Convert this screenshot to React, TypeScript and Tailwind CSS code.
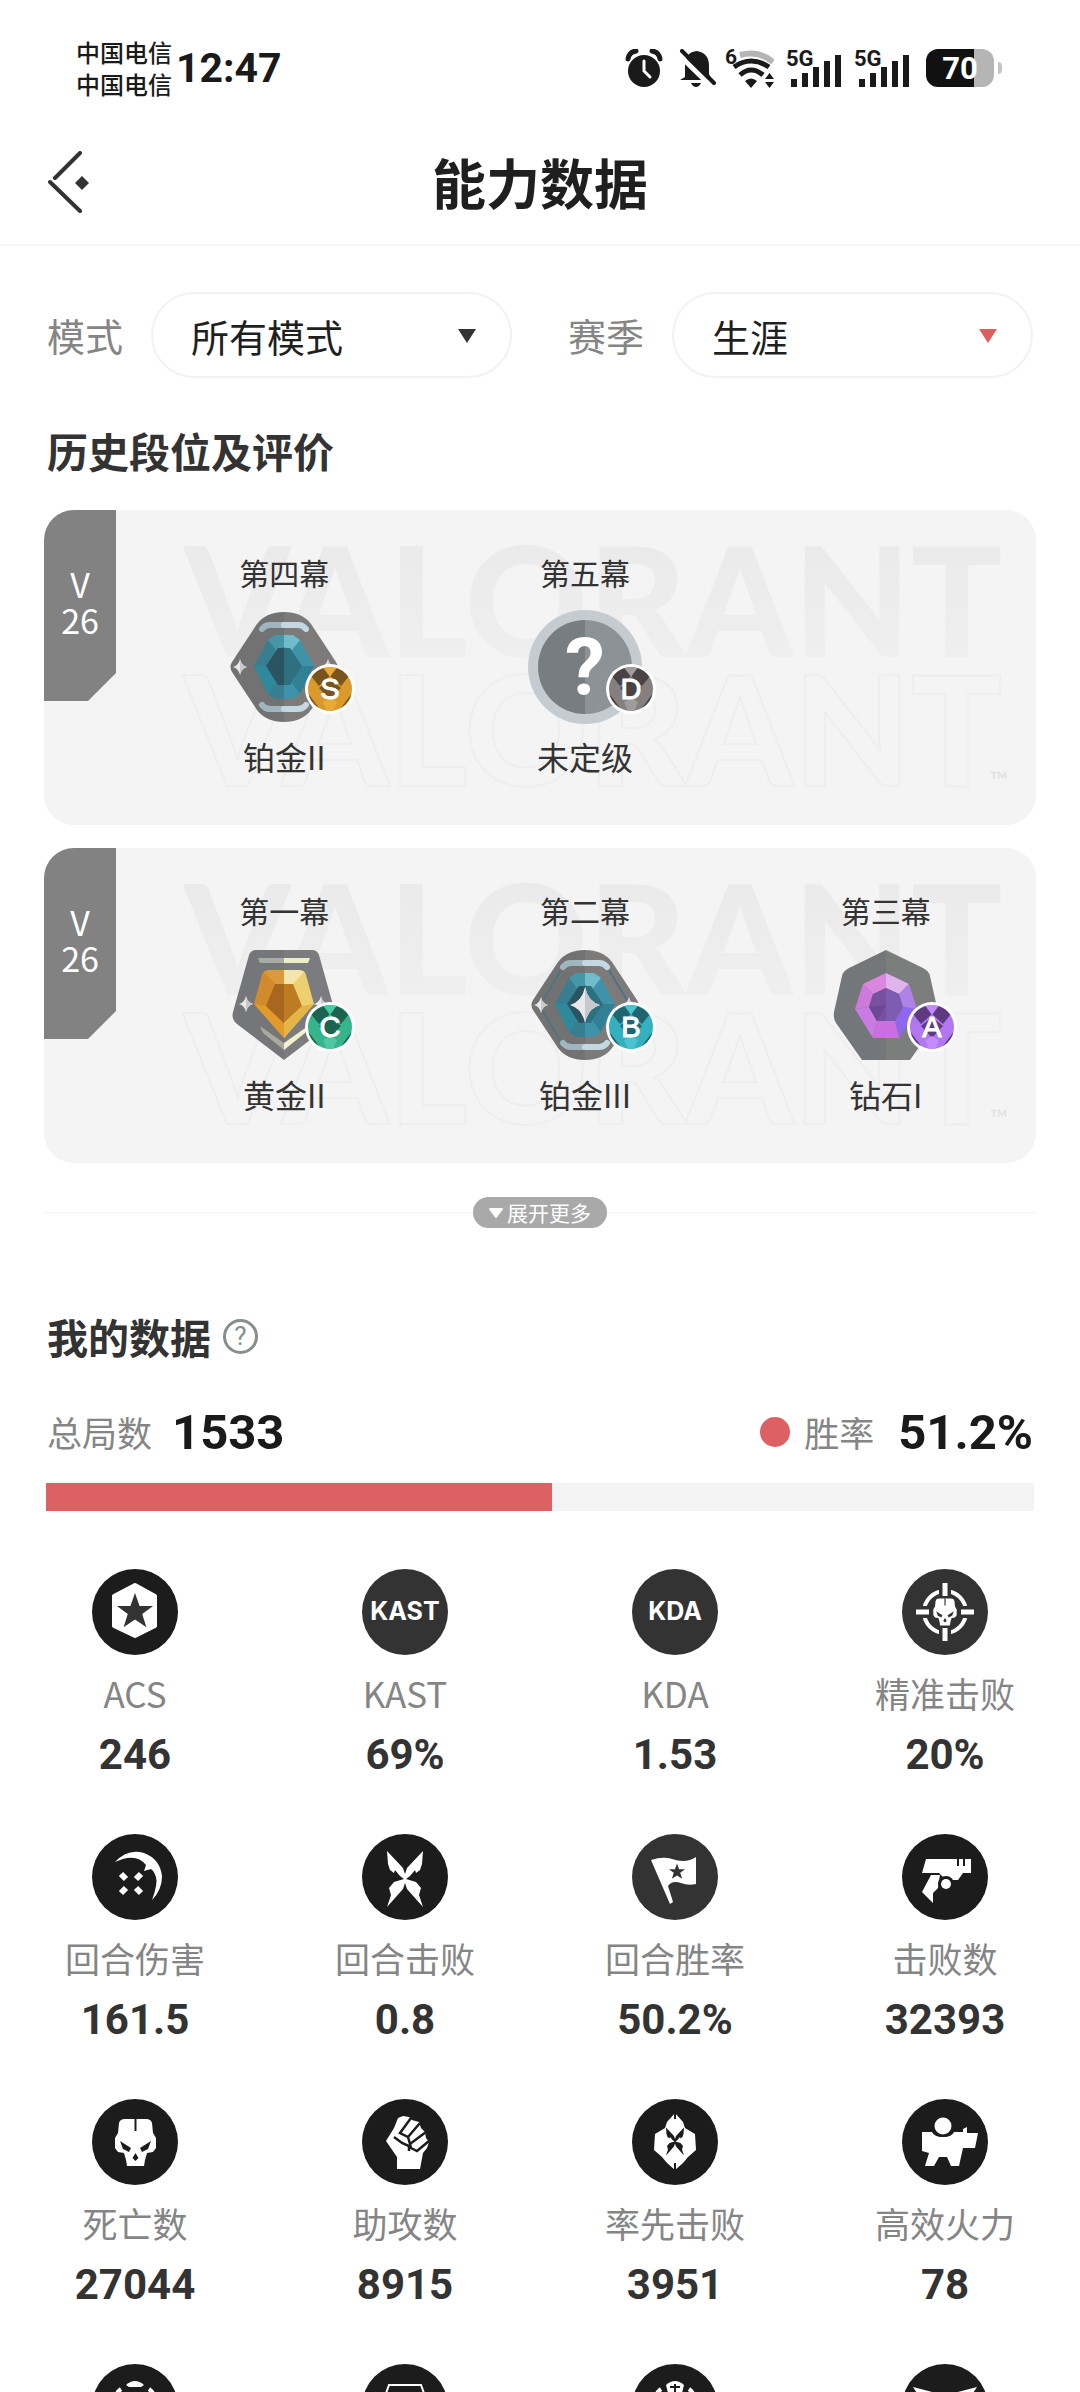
import { useState } from "react";
import type { ReactNode } from "react";

type Grade = "S" | "A" | "B" | "C" | "D";
type Tier = "platinum2" | "platinum3" | "gold" | "diamond" | "unranked";

const seasons: {
  id: string;
  acts: { act: string; tier: Tier; name: string; grade: Grade }[];
}[] = [
  {
    id: "late",
    acts: [
      { act: "第四幕", tier: "platinum2", name: "铂金II", grade: "S" },
      { act: "第五幕", tier: "unranked", name: "未定级", grade: "D" },
    ],
  },
  {
    id: "early",
    acts: [
      { act: "第一幕", tier: "gold", name: "黄金II", grade: "C" },
      { act: "第二幕", tier: "platinum3", name: "铂金III", grade: "B" },
      { act: "第三幕", tier: "diamond", name: "钻石I", grade: "A" },
    ],
  },
];

const gradeColors: Record<Grade, { main: string; dark: string; light: string }> = {
  S: { main: "#d99a2b", dark: "#7a5420", light: "#e8ab3a" },
  A: { main: "#b277f0", dark: "#5f3a80", light: "#c48bff" },
  B: { main: "#35b0bf", dark: "#1f6670", light: "#4cc3d0" },
  C: { main: "#36b48c", dark: "#1c6350", light: "#4cc9a0" },
  D: { main: "#857f80", dark: "#4a4244", light: "#a09b9c" },
};

function StatusBar() {
  return (
    <div className="flex h-[120px] items-center justify-between pt-4 pr-[78px] pl-[76px] text-[#1a1a1a]">
      <div className="flex items-center gap-1">
        <div className="text-2xl leading-8 font-medium">
          <div>中国电信</div>
          <div>中国电信</div>
        </div>
        <time className="font-['Roboto',sans-serif] text-[41px] leading-none font-bold">12:47</time>
      </div>
      <div className="flex items-center font-['Roboto',sans-serif]">
        <svg width="38" height="38" viewBox="0 0 38 38">
          <circle cx="19" cy="22" r="16" fill="currentColor" />
          <path d="M3 10Q4 3 11 2M27 2Q34 3 35 10" stroke="currentColor" strokeWidth="5" fill="none" strokeLinecap="round" />
          <path d="M19 12V22L25 28" stroke="#fff" strokeWidth="3" fill="none" strokeLinecap="round" />
        </svg>
        <svg className="ml-4" width="38" height="38" viewBox="0 0 38 38">
          <path d="M6 28V17Q6 3 18 2Q30 4 30 17V25L33 31H1Z" fill="currentColor" />
          <path d="M12 34H22Q20 38 17 38Q14 38 12 34Z" fill="currentColor" />
          <path d="M-1 5L33 38" stroke="#fff" strokeWidth="5" />
          <path d="M3 2L35 34" stroke="currentColor" strokeWidth="4" strokeLinecap="round" />
        </svg>
        <svg className="ml-2" width="49" height="44" viewBox="0 0 49 44">
          <text x="0" y="18" fontSize="21" fontWeight="700" fill="currentColor">6</text>
          <path d="M15 9Q34 4 48 16" stroke="#b5b5b5" strokeWidth="6" fill="none" />
          <path d="M9 21Q26 9 44 21" stroke="currentColor" strokeWidth="5" fill="none" />
          <path d="M15 29Q26 19 38 29" stroke="currentColor" strokeWidth="5" fill="none" />
          <path d="M20 35Q26 30 32 35L26 42Z" fill="currentColor" />
          <path d="M40 33L44.500 27L49 33ZM40 36L44.500 42L49 36Z" fill="currentColor" />
        </svg>
        <SignalIcon />
        <SignalIcon />
        <div className="ml-4 flex items-center gap-1">
          <div className="flex h-[38px] w-[68px] items-center justify-center rounded-xl bg-linear-to-r from-[#111] from-70% to-[#b5b5b5] to-70% text-[31px] leading-none font-bold text-white">
            70
          </div>
          <div className="h-3 w-1 rounded-r-full bg-[#c4c4c4]" />
        </div>
      </div>
    </div>
  );
}

function SignalIcon() {
  return (
    <svg className="ml-3" width="56" height="42" viewBox="0 0 56 42">
      <text x="0" y="19" fontSize="22" fontWeight="700" fill="currentColor">5G</text>
      <path d="M5 32h6v8H5zM16 26h6v14h-6zM27 20h6v20h-6zM38 14h6v26h-6zM49 8h6v32h-6z" fill="currentColor" />
    </svg>
  );
}

function PillSelect({
  id,
  label,
  value,
  arrow,
}: {
  id: string;
  label: string;
  value: string;
  arrow: string;
}) {
  const [selected, setSelected] = useState(value);
  return (
    <div className="flex flex-1 items-center gap-7">
      <label htmlFor={id} className="shrink-0 text-[38px] leading-none text-[#858585]">
        {label}
      </label>
      <div className="relative flex-1">
        <select
          id={id}
          value={selected}
          onChange={(e) => setSelected(e.target.value)}
          className="h-[86px] w-full appearance-none rounded-full border-2 border-[#f2f2f2] bg-white pr-20 pl-[38px] text-[38px] text-[#1f1f1f] outline-none"
        >
          <option>{value}</option>
        </select>
        <svg className={`pointer-events-none absolute top-[37px] right-9 ${arrow}`} width="18" height="14" viewBox="0 0 18 14">
          <path d="M0 0H18L9 14Z" fill="currentColor" />
        </svg>
      </div>
    </div>
  );
}

function Sparkle({ x, y, w = 7, h = 8 }: { x: number; y: number; w?: number; h?: number }) {
  return (
    <g transform={`translate(${x} ${y}) scale(${w} ${h})`}>
      <path d="M0 -1Q.2 -.2 1 0Q.2 .2 0 1Q-.2 .2 -1 0Q-.2 -.2 0 -1Z" fill="#e9e9ec" />
      <path d="M0 -1Q.2 -.2 1 0Q.2 .2 0 1Z" fill="#c9c9cd" />
    </g>
  );
}

function Platinum({ three = false }: { three?: boolean }) {
  return (
    <>
      <path d="M55 0Q37 0 28 12L3 50Q0 55 3 60L28 98Q37 110 55 110Z" fill="#727272" />
      <path d="M55 0Q73 0 82 12L107 50Q110 55 107 60L82 98Q73 110 55 110Z" fill="#7c7b7a" />
      {three && <path d="M31 20L12 52M12 60L31 92M79 20L98 52M98 60L79 92" stroke="#4f7480" strokeWidth="2" />}
      <path d="M33 17Q36 13 41 13H55M33 93Q36 97 41 97H55" stroke="#9fb6c0" strokeWidth="6" fill="none" strokeLinecap="round" />
      <path d="M55 13H69Q74 13 77 17M55 97H69Q74 97 77 93" stroke="#c5d7e1" strokeWidth="6" fill="none" strokeLinecap="round" />
      <path d="M55 23H46L39 28L25 54L39 82L46 87H55Z" fill="#377f90" />
      <path d="M55 23H64L71 28L85 54L71 82L64 87H55Z" fill="#3f93a8" />
      <path d="M55 23H46L39 28L47 38L55 35Z" fill="#4796a8" />
      <path d="M55 23H64L71 28L63 38L55 35Z" fill="#70bccb" />
      <path d="M25 54L39 82L47 71L38 54Z" fill="#2e8a9b" />
      <path d="M85 54L71 82L63 71L72 54Z" fill="#318096" />
      <path d="M55 36H49L37 54L49 73H55Z" fill="#2b5460" />
      <path d="M55 36H61L73 54L61 73H55Z" fill="#2d7181" />
      <Sparkle x={11} y={55} />
      <Sparkle x={99} y={55} />
      {three && <Sparkle x={55} y={55} w={15} h={18} />}
    </>
  );
}

function Gold() {
  return (
    <>
      <path d="M55 0H27Q22 0 20 5L4 62Q2 69 8 74L55 110Z" fill="#74767a" />
      <path d="M55 0H83Q88 0 90 5L106 62Q108 69 102 74L55 110Z" fill="#7b7c80" />
      <path d="M29 8H55V13H31Z" fill="#a9aca6" />
      <path d="M55 8H81L79 13H55Z" fill="#efecc8" />
      <path d="M31 76L55 93V100L34 83Z" fill="#a9a99c" />
      <path d="M79 76L55 93V100L76 83Z" fill="#f3efcf" />
      <path d="M55 20H40Q34 20 33 25L25 54L55 88Z" fill="#d18b2c" />
      <path d="M55 20H70Q76 20 77 25L85 54L55 88Z" fill="#ecd070" />
      <path d="M55 20H40L35 22L46 34H55Z" fill="#da9a3d" />
      <path d="M55 20H70L75 22L64 34H55Z" fill="#f4e6a9" />
      <path d="M25 54L55 88V74L37 56Z" fill="#e29a2a" />
      <path d="M85 54L55 88V74L73 56Z" fill="#e4b546" />
      <path d="M55 34H46L37 56L55 73Z" fill="#a8671f" />
      <path d="M55 34H64L73 56L55 73Z" fill="#bd7b22" />
      <Sparkle x={17} y={54} />
      <Sparkle x={92} y={54} />
    </>
  );
}

function Diamond() {
  return (
    <>
      <path d="M55 0L18 18Q12 21 11 26L3 62Q2 68 5 73L31 110H55Z" fill="#74777a" />
      <path d="M55 0L92 18Q98 21 99 26L107 62Q108 68 105 73L79 110H55Z" fill="#7c7e7d" />
      <path d="M55 23L32 34L42 44L55 38Z" fill="#dd86e0" />
      <path d="M55 23L78 34L68 44L55 38Z" fill="#dfb4ec" />
      <path d="M32 34L24 59L38 57L42 44Z" fill="#cf79dd" />
      <path d="M78 34L86 59L72 57L68 44Z" fill="#ae83e8" />
      <path d="M24 59L42 88L46 71L38 57Z" fill="#c97be3" />
      <path d="M86 59L68 88L64 71L72 57Z" fill="#8f67ee" />
      <path d="M42 88H68L64 71H46Z" fill="#cb6fde" />
      <path d="M55 38L42 44L38 57L46 71H55Z" fill="#77509f" />
      <path d="M55 38L68 44L72 57L64 71H55Z" fill="#7e5cb2" />
      <path d="M55 55L38 57L46 71Z" fill="#6c4793" />
    </>
  );
}

function Unranked() {
  return (
    <>
      <circle cx="55" cy="55" r="57" fill="#c4ccd1" />
      <path d="M55 8A47 47 0 0 0 55 102Z" fill="#777d80" />
      <path d="M55 8A47 47 0 0 1 55 102Z" fill="#8c9396" />
      <text x="55" y="83" fontSize="80" fontWeight="700" textAnchor="middle" fill="#fff">?</text>
    </>
  );
}

function TierIcon({ tier }: { tier: Tier }) {
  return (
    <svg className="overflow-visible font-['Roboto',sans-serif]" width="110" height="110" viewBox="0 0 110 110">
      {tier === "platinum2" && <Platinum />}
      {tier === "platinum3" && <Platinum three />}
      {tier === "gold" && <Gold />}
      {tier === "diamond" && <Diamond />}
      {tier === "unranked" && <Unranked />}
    </svg>
  );
}

function GradeBadge({ grade }: { grade: Grade }) {
  const c = gradeColors[grade];
  return (
    <svg
      className="absolute -right-4 bottom-2 font-['Liberation_Sans',sans-serif]"
      width="50"
      height="50"
      viewBox="0 0 50 50"
    >
      <clipPath id={`badge-${grade}`}>
        <circle cx="25" cy="25" r="22" />
      </clipPath>
      <circle cx="25" cy="25" r="25" fill="#fff" />
      <g clipPath={`url(#badge-${grade})`}>
        <path d="M0 0H50V50H0Z" fill={c.main} />
        <path d="M8 4L19 2L25 12L14 22L6 12Z" fill={c.dark} />
        <path d="M42 4L31 2L25 12L36 22L44 12Z" fill={c.dark} />
        <path d="M17 2H33L25 13Z" fill={c.light} />
        <path d="M25 15L36 24L25 36L14 24Z" fill={c.dark} />
        <path d="M2 28L17 48H4Z" fill={c.dark} />
        <path d="M48 28L33 48H46Z" fill={c.dark} />
        <path d="M18 38L25 34L32 38L27 50H23Z" fill={c.light} />
      </g>
      <text x="25" y="35" fontSize="29" textAnchor="middle" fill="#fff" stroke="#fff" strokeWidth="1">
        {grade}
      </text>
    </svg>
  );
}

function Watermark() {
  return (
    <div
      aria-hidden="true"
      className="pointer-events-none absolute top-6 right-7 left-[140px] font-['Lato',sans-serif] text-[152px] leading-[129px] font-black"
    >
      <div className="bg-linear-to-b from-[#eaeaea] to-[#efefef] bg-clip-text text-transparent">VALORANT</div>
      <div className="text-[#f4f4f4] [-webkit-text-stroke:2px_#eeeeee]">VALORANT</div>
      <span className="absolute right-0 bottom-0 text-2xl leading-none font-normal text-[#e2e2e2]">™</span>
    </div>
  );
}

function SeasonCard({ acts }: { acts: (typeof seasons)[number]["acts"] }) {
  return (
    <section className="relative flex items-start gap-[18px] overflow-hidden rounded-[30px] bg-[#f4f4f4]">
      <Watermark />
      <div className="flex h-[191px] w-[72px] flex-col items-center justify-center bg-[#828282] pb-2 text-[34px] leading-9 text-white [clip-path:polygon(0_0,100%_0,100%_163px,44px_100%,0_100%)]">
        <span>V</span>
        <span>26</span>
      </div>
      <div className="relative grid flex-1 grid-cols-3 pt-[42px] pb-[49px] text-[#333]">
        {acts.map(({ act, tier, name, grade }) => (
          <div key={act} className="flex flex-col items-center">
            <span className="text-[30px] leading-10">{act}</span>
            <div className="relative mt-5 mb-3.5">
              <TierIcon tier={tier} />
              <GradeBadge grade={grade} />
            </div>
            <span className="text-[32px] leading-10">{name}</span>
          </div>
        ))}
      </div>
    </section>
  );
}

const star = "M0 -10L2.400 -3.200H9.500L3.800 1L6 8L0 4L-6 8L-3.800 1L-9.500 -3.200H-2.400Z";

function Skull({ hole }: { hole: string }) {
  return (
    <>
      <path
        d="M33 20H54Q59 20 60 24L61 34L64 39V49L61 53L55 54L53 61L52 67H35L34 61L32 54L26 53L23 49V39L26 34L27 24Q28 20 33 20Z"
        fill="#fff"
      />
      <path d="M28 42L39 49L37 53L31 50ZM59 42L48 49L50 53L56 50ZM43.500 54L46.500 59L43.500 62L40.500 59Z" fill={hole} />
      <path d="M43.500 20V32" stroke={hole} strokeWidth="2" />
    </>
  );
}

function Wings({ fill }: { fill: string }) {
  return (
    <path
      d="M25 17L41 34L43 40L45 34L61 17L60 30L58 36L54 39L53 36L48 42L44 45L54 48L59 54L57 61L61 73L45 55L43 49L41 55L25 73L29 61L27 54L32 48L42 45L38 42L33 36L32 39L28 36L26 30Z"
      fill={fill}
    />
  );
}

const icons: Record<string, ReactNode> = {
  acs: (
    <>
      <path d="M43 16L63 27V57L43 67L22 57V27Z" fill="#fff" stroke="#fff" strokeWidth="4" strokeLinejoin="round" />
      <path d={star} transform="translate(43 43) scale(1.9)" fill="#333" />
    </>
  ),
  precise: (
    <>
      <circle cx="43" cy="43" r="21" fill="none" stroke="#fff" strokeWidth="4" />
      <path d="M43 12V30M43 56V74M12 43H30M56 43H74" stroke="#333" strokeWidth="12" />
      <path d="M43 14V27M43 59V72M14 43H27M59 43H72" stroke="#fff" strokeWidth="5" />
      <g transform="translate(18.200 18.200) scale(.57)">
        <Skull hole="#333" />
      </g>
    </>
  ),
  damage: (
    <>
      <path d="M23 28Q36 14 52 19Q68 25 70 42Q70 56 60 66Q66 50 64 43Q62 37 59 35L52 37L54 31Q44 18 23 28Z" fill="#fff" />
      <path d="M29 40L34 45M49 40L44 45M29 59L34 54M49 59L44 54" stroke="#fff" strokeWidth="6" />
    </>
  ),
  wings: <Wings fill="#fff" />,
  flag: (
    <>
      <path d="M19 26Q31 22 40 25Q54 30 64 23V50Q56 52 49 49Q40 46 36 52L41 68L38 70Z" fill="#fff" />
      <path d={star} transform="translate(45 38) scale(.85)" fill="#333" />
    </>
  ),
  gun: (
    <>
      <path d="M24 25H69V39H61L56 46L44 46L37 39H20Z" fill="#fff" />
      <path d="M29 41H38L36 54L31 59V69L20 58Z" fill="#fff" />
      <circle cx="44" cy="50" r="8" fill="#1c1c1c" />
      <circle cx="44" cy="50" r="5" fill="#fff" />
      <path d="M56 25V32M62 25V32" stroke="#1c1c1c" strokeWidth="2" />
    </>
  ),
  skull: <Skull hole="#1c1c1c" />,
  fist: (
    <>
      <path d="M35 70V58L24 42L32 29L36 19L41 17L47 18L50 21L57 23L59 29L63 33L64 39L67 43L65 49L61 54L58 70Z" fill="#fff" />
      <path d="M49 19L38 34L46 38L58 24M46 38L48 45L64 33M48 45L49 49L55 52L67 42M32 38L40 44L47 47V52" stroke="#1c1c1c" strokeWidth="2.500" fill="none" />
    </>
  ),
  first: (
    <>
      <path d="M43 14L51 23L53 29L63 35L64 51L56 58L51 64L43 71L35 64L30 58L22 51L23 35L33 29L35 23Z" fill="#fff" />
      <path d="M43 14V20M43 64V71" stroke="#1c1c1c" strokeWidth="2" />
      <g transform="translate(21.500 20) scale(.5)">
        <Wings fill="#1c1c1c" />
      </g>
    </>
  ),
  power: (
    <>
      <path d="M20 33H30Q32 38 41 38Q50 38 52 33H61V30L65 28V34H76L73 49H61L57 67H49L45 58H37L32 67H23L27 54L20 52Z" fill="#fff" />
      <circle cx="41" cy="27" r="11" fill="#1c1c1c" />
      <circle cx="41" cy="27" r="8.500" fill="#fff" />
    </>
  ),
  ring: (
    <>
      <path d="M34 21Q43 13 52 21L49 23H37Z" fill="#fff" />
      <path d="M22 40Q22 30 29 25M64 40Q64 30 57 25" stroke="#fff" strokeWidth="4" fill="none" />
    </>
  ),
  hex: <path d="M19 43L27 21H59L67 43L59 65H27Z" stroke="#fff" strokeWidth="2" fill="none" />,
  ringSkull: (
    <>
      <path d="M34 21Q43 13 52 21L50 29H36Z" fill="#fff" />
      <path d="M43 20V29M38 23H48" stroke="#1c1c1c" strokeWidth="2" />
      <path d="M22 40Q22 30 29 25M64 40Q64 30 57 25" stroke="#fff" strokeWidth="4" fill="none" />
    </>
  ),
  horns: <path d="M11 23L34 29H52L75 23L62 43L43 60L24 43Z" fill="#fff" />,
};

const stats: { icon: string; label: string; value: string; soft?: boolean }[] = [
  { icon: "acs", label: "ACS", value: "246" },
  { icon: "KAST", label: "KAST", value: "69%", soft: true },
  { icon: "KDA", label: "KDA", value: "1.53", soft: true },
  { icon: "precise", label: "精准击败", value: "20%", soft: true },
  { icon: "damage", label: "回合伤害", value: "161.5" },
  { icon: "wings", label: "回合击败", value: "0.8" },
  { icon: "flag", label: "回合胜率", value: "50.2%", soft: true },
  { icon: "gun", label: "击败数", value: "32393" },
  { icon: "skull", label: "死亡数", value: "27044" },
  { icon: "fist", label: "助攻数", value: "8915" },
  { icon: "first", label: "率先击败", value: "3951" },
  { icon: "power", label: "高效火力", value: "78" },
];

const nextRow = ["ring", "hex", "ringSkull", "horns"];

function StatIcon({ icon, soft }: { icon: string; soft?: boolean }) {
  return (
    <div
      className={`flex size-[86px] items-center justify-center rounded-full font-['Inter',sans-serif] text-[25px] font-bold text-white ${
        soft ? "bg-[#333]" : "bg-[#1c1c1c]"
      }`}
    >
      {icons[icon] ? (
        <svg width="86" height="86" viewBox="0 0 86 86">
          {icons[icon]}
        </svg>
      ) : (
        icon
      )}
    </div>
  );
}

export default function App() {
  const total = 1533;
  const winRate = 51.2;

  return (
    <div
      lang="zh-CN"
      className="h-screen overflow-y-auto bg-white font-['Noto_Sans_CJK_SC',sans-serif] [scrollbar-width:none]"
    >
      <StatusBar />
      <header className="grid h-[126px] grid-cols-[1fr_auto_1fr] items-center border-b-2 border-[#f7f7f7] px-12">
        <button type="button" aria-label="返回" className="w-fit">
          <svg width="42" height="62" viewBox="0 0 42 62">
            <path d="M32 2L7 27M2 31L32 60" stroke="#333" strokeWidth="4" strokeLinecap="round" />
            <path d="M34 25L41 32L34 39L27 32Z" fill="#333" />
          </svg>
        </button>
        <h1 className="text-[54px] leading-none font-bold text-[#1f1f1f]">能力数据</h1>
      </header>

      <main>
        <div className="flex gap-14 px-[47px] pt-[46px]">
          <PillSelect id="mode" label="模式" value="所有模式" arrow="text-[#333]" />
          <PillSelect id="season" label="赛季" value="生涯" arrow="text-[#dc5f5f]" />
        </div>

        <div className="px-11">
          <h2 className="mt-11 px-[3px] text-[41px] leading-[56px] font-bold text-[#333]">
            历史段位及评价
          </h2>
          <div className="mt-8 flex flex-col gap-[23px]">
            {seasons.map((s) => (
              <SeasonCard key={s.id} acts={s.acts} />
            ))}
          </div>
          <div className="mt-[34px] flex items-center">
            <div className="h-0.5 flex-1 bg-[#f8f8f8]" />
            <button
              type="button"
              className="flex h-[31px] items-center gap-1 rounded-full bg-[#a9a9a9] px-4 text-[21px] leading-none text-white"
            >
              <svg width="14" height="10" viewBox="0 0 14 10">
                <path d="M1 1H13L7 9Z" fill="#fff" stroke="#fff" strokeWidth="2" strokeLinejoin="round" />
              </svg>
              展开更多
            </button>
            <div className="h-0.5 flex-1 bg-[#f8f8f8]" />
          </div>

          <div className="mt-20 flex items-center gap-3 px-[3px]">
            <h2 className="text-[41px] leading-[56px] font-bold text-[#333]">我的数据</h2>
            <button
              type="button"
              aria-label="说明"
              className="flex size-[35px] items-center justify-center rounded-full border-3 border-[#858f8c] font-['Roboto',sans-serif] text-[26px] leading-none text-[#858f8c]"
            >
              ?
            </button>
          </div>
          <div className="mt-[38px] flex h-[60px] items-center justify-between px-[3px] text-[35px] text-[#858585]">
            <div className="flex items-center gap-5">
              <span>总局数</span>
              <strong className="font-['Roboto',sans-serif] text-[49px] leading-none font-bold text-[#1a1a1a]">
                {total}
              </strong>
            </div>
            <div className="flex items-center gap-6">
              <span className="flex items-center gap-3.5">
                <span className="size-[30px] rounded-full bg-[#dd6162]" />
                胜率
              </span>
              <strong className="font-['Roboto',sans-serif] text-[49px] leading-none font-bold text-[#1a1a1a]">
                {winRate}%
              </strong>
            </div>
          </div>
          <div className="mx-0.5 mt-[21px] h-7 bg-[#f3f3f3]">
            <div className="h-full bg-[#dd6162]" style={{ width: `${winRate}%` }} />
          </div>
        </div>

        <div className="mt-[58px] grid grid-cols-4 gap-y-[55px]">
          {stats.map((s) => (
            <div key={s.label} className="flex flex-col items-center">
              <StatIcon icon={s.icon} soft={s.soft} />
              <span className="mt-5 text-[35px] leading-9 text-[#858585]">{s.label}</span>
              <strong className="mt-5 font-['Roboto',sans-serif] text-[42px] leading-[48px] font-bold text-[#333]">
                {s.value}
              </strong>
            </div>
          ))}
          {nextRow.map((icon) => (
            <div key={icon} className="flex justify-center">
              <StatIcon icon={icon} />
            </div>
          ))}
        </div>
      </main>
    </div>
  );
}
